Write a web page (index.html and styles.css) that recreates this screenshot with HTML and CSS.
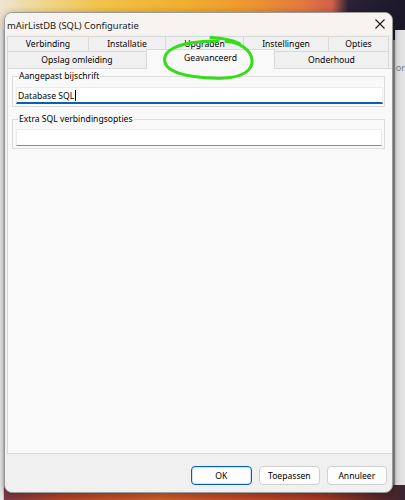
FILE: index.html
```html
<!DOCTYPE html>
<html>
<head>
<meta charset="utf-8">
<link rel="stylesheet" href="styles.css">
</head>
<body>
<div class="desk">
  <div class="win">
    <div class="titlebar">
      <span class="title">mAirListDB (SQL) Configuratie</span>
      <svg class="close" width="10" height="10" viewBox="0 0 10 10"><path d="M0.5 0.5L9.5 9.5M9.5 0.5L0.5 9.5" stroke="#1b1b1b" stroke-width="1.1" fill="none"/></svg>
    </div>
    <div class="client">
      <div class="tabs">
        <div class="row row1">
          <div class="tab">Verbinding</div>
          <div class="tab">Installatie</div>
          <div class="tab">Upgraden</div>
          <div class="tab">Instellingen</div>
          <div class="tab">Opties</div>
        </div>
        <div class="row row2">
          <div class="tab">Opslag omleiding</div>
          <div class="tab sel">Geavanceerd</div>
          <div class="tab">Onderhoud</div>
        </div>
      </div>
      <div class="panel">
        <fieldset class="group g1">
          <legend>Aangepast bijschrift</legend>
          <div class="edit focus"><span>Database SQL</span><i class="caret"></i></div>
        </fieldset>
        <fieldset class="group g2">
          <legend>Extra SQL verbindingsopties</legend>
          <div class="edit"></div>
        </fieldset>
      </div>
      <div class="buttons">
        <div class="btn def">OK</div>
        <div class="btn">Toepassen</div>
        <div class="btn">Annuleer</div>
      </div>
    </div>
  </div>
  <div class="side">or</div>
</div>
<svg class="ink" width="405" height="500" viewBox="0 0 405 500">
  <path d="M211 37.5 C222 38 232 40 239.5 43.5 M226 41.5 C240 42 251 50 252 60 C253 70 243 77 225 78 C205 79 180 76 170 69 C162 63 163 54 172 49 C182 43 200 41 218 41" stroke="#33dd18" stroke-width="3" fill="none" stroke-linecap="round"/>
</svg>
</body>
</html>
```
FILE: styles.css
```css
html, body {
  margin: 0;
  padding: 0;
}
body {
  width: 405px;
  height: 500px;
  overflow: hidden;
  position: relative;
  font-family: "Noto Sans", "Open Sans", sans-serif;
  background:
    linear-gradient(to right, #e9e9e9 0, #e9e9e9 3px, #c8c8c8 3px, #c8c8c8 4px, transparent 4px) 0 30px / 5px 470px no-repeat,
    linear-gradient(to right, #c9c9c9 0, #e2e2e2 2px, #e4e4e4 100%) 395px 30px / 10px 455px no-repeat,
    linear-gradient(to right, #7a3a4a 0, #b8442a 15%, #d0602c 40%, #c44a2a 60%, #a83828 80%, #3a2430 100%) 0 485px / 405px 15px no-repeat,
    linear-gradient(to right, #ede6d2 0, #f0d890 10%, #f2c24a 25%, #f0b032 45%, #ee9a30 60%, #e27840 75%, #d06048 82%, #2a2238 86%, #1c1828 100%) 0 0 / 405px 40px no-repeat,
    #888;
}
.desk {
  display: flex;
  padding: 12px 0 0 4px;
}
.win {
  width: 389px;
  height: 479px;
  border: 1px solid #9a9a9a;
  border-radius: 8px;
  background: #f0f0f0;
  box-shadow: 0 2px 8px rgba(0,0,0,0.35);
  display: flex;
  flex-direction: column;
  overflow: hidden;
}
.titlebar {
  height: 22px;
  flex: none;
  background: #f6f3f0;
  display: flex;
  align-items: center;
  justify-content: space-between;
  padding: 0 7px 0 2px;
}
.title {
  font-size: 9.4px;
  color: #1a1a1a;
  padding-top: 2px;
}
.close {
  display: block;
}
.client {
  flex: 1;
  display: flex;
  flex-direction: column;
  padding: 1px 4px 0 2px;
}
.tabs {
  display: flex;
  flex-direction: column;
  font-size: 8.6px;
  color: #000;
}
.row {
  display: grid;
  height: 16px;
}
.row1 {
  grid-template-columns: 81px 77px 78px 85px 61px;
}
.row2 {
  grid-template-columns: 139px 128px 115px;
  height: 17px;
  margin-top: -1px;
  position: relative;
  z-index: 1;
}
.tab {
  border: 1px solid #d9d9d9;
  margin-right: -1px;
  background: #f0f0f0;
  display: flex;
  align-items: center;
  justify-content: center;
  line-height: 12px;
}
.row .tab:last-child {
  margin-right: 0;
}
.tab.sel {
  background: #f9f9f9;
  border-bottom: none;
  margin-top: -2px;
  height: 20px;
  position: relative;
  z-index: 2;
  align-items: flex-start;
  padding-top: 2px;
  box-sizing: border-box;
}
.panel {
  height: 383px;
  width: 381px;
  border: 1px solid #d9d9d9;
  background: #f9f9f9;
  padding: 1px 5px 0 4px;
  display: flex;
  flex-direction: column;
  gap: 6px;
}
.group {
  margin: 0;
  border: 1px solid #dcdcdc;
  width: 367px;
  padding: 5px 1px 2px 3px;
}
.g2 {
  padding-top: 4px;
}
.group legend {
  font-size: 8.6px;
  line-height: 12px;
  padding: 0 1px;
  margin-left: 2px;
  color: #000;
}
.edit {
  height: 17px;
  background: #fff;
  box-sizing: border-box;
  border: 1px solid #ececec;
  border-bottom: 1px solid #8c8c8c;
  font-size: 8.6px;
  display: flex;
  align-items: center;
  padding-left: 1px;
  color: #000;
}
.edit.focus {
  border-bottom: 2px solid #0a5fb4;
  padding-top: 1px;
}
.caret {
  display: inline-block;
  width: 1px;
  height: 11px;
  background: #000;
  margin-left: 1px;
}
.g2 .edit {
  width: 366px;
}
.buttons {
  display: flex;
  justify-content: flex-end;
  gap: 7px;
  margin-top: 12px;
  padding-right: 1px;
}
.btn {
  width: 61px;
  height: 19px;
  box-sizing: border-box;
  border: 1px solid #d0d0d0;
  border-radius: 4px;
  background: #fdfdfd;
  font-size: 8.6px;
  display: flex;
  align-items: center;
  justify-content: center;
  color: #000;
}
.btn:last-child {
  width: 60px;
}
.btn.def {
  border: 1px solid #005fb8;
  box-shadow: inset 0 0 0 1px #cfe0f2;
}
.side {
  font-size: 9px;
  color: #777;
  margin-top: 49px;
  margin-left: 3px;
}
.ink {
  position: absolute;
  left: 0;
  top: 0;
  z-index: 10;
  pointer-events: none;
}
```
